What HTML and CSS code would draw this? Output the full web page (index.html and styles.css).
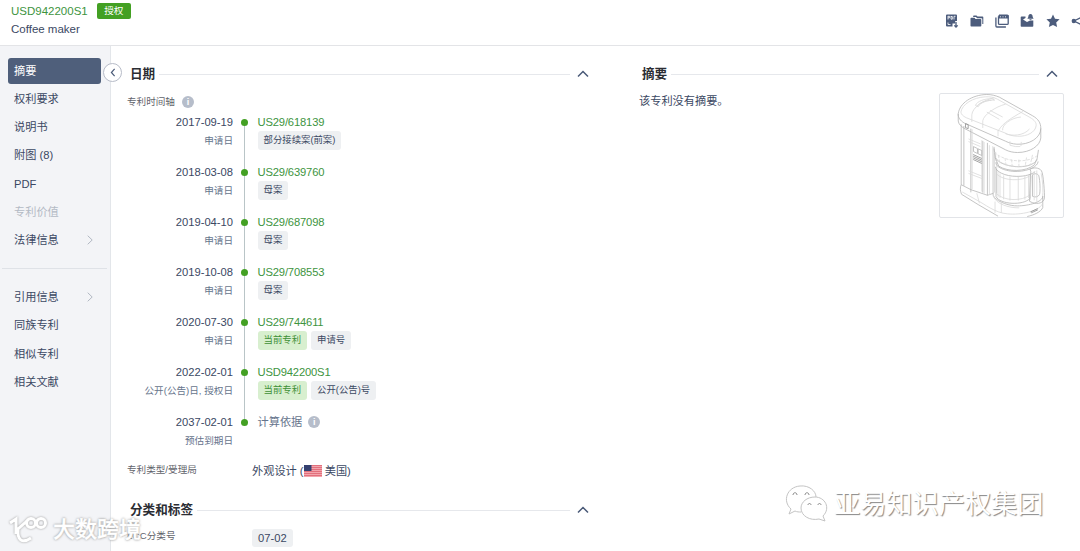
FILE: index.html
```html
<!DOCTYPE html>
<html lang="zh-CN">
  <head>
    <meta charset="UTF-8" />
    <meta name="viewport" content="width=device-width, initial-scale=1.0" />
    <title>USD942200S1 Coffee maker</title>
    <link rel="stylesheet" href="styles.css">
  </head>
  <body>
    <header class="header">
      <div class="patent">
        <div class="patent-no">
          <a>USD942200S1</a>
          <span class="status">授权</span>
        </div>
        <div class="patent-title">Coffee maker</div>
      </div>
      <div class="toolbar">
        <svg viewBox="0 0 14 14"><path d="M2 .5h9a1 1 0 0 1 1 1V7h-1.800v2.500H7.500v3H2a1 1 0 0 1-1-1v-10a1 1 0 0 1 1-1z"/><path class="cut" d="M3 2v3.500M3 2.300h1.500v1.500H3M6 2v3.200h1.300V2.500H6M9 5.500V2.300h1.500M3 8.500v2h2.500"/><path class="line" d="M11 8v5M9.300 11.400l1.700 1.700 1.700-1.700"/></svg>
        <svg viewBox="0 0 14 14"><path d="M3.500 1.500h3l1 1H12.500a.8.800 0 0 1 .8.800V10h-1V5a.8.800 0 0 0-.8-.8H7L6 3H3z"/><path d="M.5 4.500a.8.800 0 0 1 .8-.8h3.200l1 1.200h5a.8.800 0 0 1 .8.800v6a.8.800 0 0 1-.8.800H1.300a.8.800 0 0 1-.8-.8z"/></svg>
        <svg viewBox="0 0 14 14"><path class="line" d="M4 1.200h8.200a1 1 0 0 1 1 1v7.200a1 1 0 0 1-1 1H4.500a1 1 0 0 1-1-1V2.200M.9 3.500v8.500a1 1 0 0 0 1 1h9"/><path d="M3.500 1h10v3.500h-10z"/><path class="cut" d="M5 2.800h1M7.500 2.800h1M10 2.800h1"/></svg>
        <svg viewBox="0 0 14 14"><path d="M1.500 2.500h4v1.500L3 5.500 7 8l3-1.500h3.300V12a.8.800 0 0 1-.8.800h-11a.8.800 0 0 1-.8-.8V3.300a.8.800 0 0 1 .8-.8z"/><path d="M10.500 0c1.600 0 2.200 1.400 2.200 3l.9 1.800H7.400L8.300 3c0-1.600.6-3 2.200-3zM9.500 5.200h2v.8h-2z"/></svg>
        <svg viewBox="0 0 14 14"><path d="M7 .5l2 4.200 4.600.6-3.400 3.200.9 4.600L7 10.900l-4.100 2.200.9-4.600L.4 5.300 5 4.700z"/></svg>
        <svg viewBox="0 0 14 14"><path class="line" d="M11 3L3 7l8 4"/><circle cx="2.800" cy="7" r="2.200"/><circle cx="11" cy="3" r="2"/><circle cx="11" cy="11" r="2"/></svg>
      </div>
    </header>

    <div class="layout">
      <nav class="sidebar">
        <ul>
          <li class="active">摘要</li>
          <li>权利要求</li>
          <li>说明书</li>
          <li>附图 (8)</li>
          <li>PDF</li>
          <li class="disabled">专利价值</li>
          <li>法律信息<svg class="arrow" viewBox="0 0 6 10"><path d="M.7.7L5.200 5 .7 9.300"/></svg></li>
        </ul>
        <ul>
          <li>引用信息<svg class="arrow" viewBox="0 0 6 10"><path d="M.7.7L5.200 5 .7 9.300"/></svg></li>
          <li>同族专利</li>
          <li>相似专利</li>
          <li>相关文献</li>
        </ul>
        <button class="collapse"><svg viewBox="0 0 6 10"><path d="M4.800 1L1.200 5l3.600 4"/></svg></button>
      </nav>

      <main class="content">
        <div class="col-left">
          <div class="section-head">
            <h2>日期</h2>
            <svg class="chevron" viewBox="0 0 12 8"><path d="M1 6.500L6 1.500l5 5"/></svg>
          </div>
          <div class="label timeline-label">专利时间轴 <i class="info">i</i></div>

          <ul class="timeline">
            <li>
              <div class="when"><b>2017-09-19</b><small>申请日</small></div>
              <div class="what"><a>US29/618139</a><div><span class="tag">部分接续案(前案)</span></div></div>
            </li>
            <li>
              <div class="when"><b>2018-03-08</b><small>申请日</small></div>
              <div class="what"><a>US29/639760</a><div><span class="tag">母案</span></div></div>
            </li>
            <li>
              <div class="when"><b>2019-04-10</b><small>申请日</small></div>
              <div class="what"><a>US29/687098</a><div><span class="tag">母案</span></div></div>
            </li>
            <li>
              <div class="when"><b>2019-10-08</b><small>申请日</small></div>
              <div class="what"><a>US29/708553</a><div><span class="tag">母案</span></div></div>
            </li>
            <li>
              <div class="when"><b>2020-07-30</b><small>申请日</small></div>
              <div class="what"><a>US29/744611</a><div><span class="tag current">当前专利</span><span class="tag">申请号</span></div></div>
            </li>
            <li>
              <div class="when"><b>2022-02-01</b><small>公开(公告)日, 授权日</small></div>
              <div class="what"><a>USD942200S1</a><div><span class="tag current">当前专利</span><span class="tag">公开(公告)号</span></div></div>
            </li>
            <li>
              <div class="when"><b>2037-02-01</b><small>预估到期日</small></div>
              <div class="what"><span class="basis">计算依据 <i class="info">i</i></span></div>
            </li>
          </ul>

          <div class="field">
            <span class="label">专利类型/受理局</span>
            <span class="value">外观设计 (<svg class="flag" viewBox="0 0 18 12"><path fill="#f3a5ad" d="M0 0h18v12H0z"/><path stroke="#e2707c" d="M0 .5h18M0 2.500h18M0 4.500h18M0 6.500h18M0 8.500h18M0 10.500h18"/><path fill="#34406f" d="M0 0h7.500v6H0z"/></svg> 美国)</span>
          </div>

          <div class="section-head second">
            <h2>分类和标签</h2>
            <svg class="chevron" viewBox="0 0 12 8"><path d="M1 6.500L6 1.500l5 5"/></svg>
          </div>
          <div class="field loc">
            <span class="label">LOC分类号</span>
            <span class="code">07-02</span>
          </div>
        </div>

        <div class="col-right">
          <div class="section-head">
            <h2>摘要</h2>
            <svg class="chevron" viewBox="0 0 12 8"><path d="M1 6.500L6 1.500l5 5"/></svg>
          </div>
          <div class="abstract">
            <p>该专利没有摘要。</p>
            <div class="figure">
              <svg viewBox="29 101 371 370">
                <!-- lid -->
                <path d="M84 160C88 128 125 103 170 102c14 0 26 3 38 8l100 56c18 10 25 22 25 38 0 30-36 50-72 48-14-1-24-4-34-9L102 188c-12-7-19-17-18-28z"/>
                <path class="faint" d="M92 155c4-24 36-44 74-46 14-1 26 2 36 7l98 55c14 8 20 16 19 25-2 20-28 33-56 32-16-1-28-4-38-10L108 172c-10-5-15-10-16-17z"/>
                <path d="M84 160v22c1 9 8 16 18 22l125 65c10 5 22 8 36 8 38 0 68-20 70-44v-29"/>
                <path class="faint" d="M125 185v-22c2-22 35-45 68-51M158 203v-22c3-18 38-42 69-50M204 228v-18M205 211c14-24 40-38 74-58M136 135c3-12 30-22 50-20l8 4c-20-1-44 7-50 20zM142 136c5-9 26-17 42-16M170 155l38 22M180 150l38 20"/>
                <path class="faint" d="M240 243v12l16 4h14l4-4v-10M218 210c-3-16 25-38 55-40M226 220c20 8 55 7 73-14"/>
                <!-- body -->
                <path d="M93 192v182M122 205v192M158 242v156M192 260v138M172 248v158l18-6M93 374l29 15 50 17M101 197v180"/>
                <path class="faint" d="M126 207v180M155 240v155M162 245v156M178 255v150M188 258v142M115 236l36 15M115 244l36 15M115 332l42 17M115 340l42 16M197 275v28M200 305v95"/>
                <path d="M130 259l12 6v15l-12-6zM144 266l11 5v15l-11-5z"/>
                <path class="dark" d="M129 283l26 12M129 288l26 12M129 293l26 12M129 298l26 12M106 190v12l8 3v-12z"/>
                <!-- filter basket -->
                <path d="M192 265l4 28c20 30 100 38 125 8l5-32M196 293l10 25c28 18 82 18 108-4l6-16"/>
                <path class="faint dash" d="M193 276c30 30 100 35 130 10M198 298c28 26 92 28 120 8M205 285l5 27M225 294l4 26M245 298l2 24M267 298v24M290 292l-4 26M308 284l-6 27"/>
                <!-- carafe -->
                <path d="M198 306c-4 14 28 29 64 28 35-1 62-15 63-30M196 320c0 14 29 29 65 29 26 0 44-6 55-14M198 326v84c12 24 82 28 103 5v-72"/>
                <path class="faint" d="M204 334v78M210 340v74M221 346v72M240 350v72M265 350v72M285 347v72M296 344v70M198 400c23 24 79 25 103 4M201 343c20 20 75 21 98 5"/>
                <path d="M300 328c10-7 28-6 35 4 6 9 10 72 9 82-2 15-19 20-37 14l-8-4 4-91zM308 344c6-5 16-4 19 3 4 16 5 48 2 57-4 7-13 9-21 5z"/>
                <path class="faint" d="M313 333v88M321 331v94M334 340c5 20 7 54 4 76M304 348l-3 72"/>
                <!-- base -->
                <path d="M93 374c-4 8-3 20 1 29l50 31 60 35M190 398c-9 16 34 40 72 40 36 0 76-12 77-29M339 409v34c-5 13-27 23-47 27"/>
                <path class="faint" d="M96 396l45 25c20 10 55 39 92 41 40 4 94-8 104-29M140 400l8 30M195 425v34M190 410c10 22 44 34 78 34M214 427v32"/>
                <path class="dark" d="M302 456l22-10M304 459l20-9"/>
              </svg>
            </div>
          </div>
        </div>
      </main>
    </div>

    <div class="mark mark-left">
      <svg viewBox="0 0 42 30"><path d="M2 8l6-4v15M19 6l-9 8c-1 11 4 15 13 9"/><circle cx="23" cy="8" r="4.500"/><circle cx="33" cy="8" r="4.500"/></svg>
      <span>大数跨境</span>
    </div>
    <div class="mark mark-right">
      <svg viewBox="0 0 44 38"><path class="shade" d="M16 27c-2 0-4 0-6-1l-6 3 2-5C-3 16 2 2 15 1c9-1 16 5 16 11"/><path class="shade" d="M30 12c-8 0-14 5-14 11 0 8 9 13 18 11l6 2-2-5c8-8 2-19-8-19z"/><path class="eyes" d="M8 10c0-3 4-3 4 0M20 10c0-3 4-3 4 0M23 20c0-2 3-2 3 0M33 20c0-2 3-2 3 0"/></svg>
      <span>亚易知识产权集团</span>
    </div>
  </body>
</html>
```

FILE: styles.css
```css
* {
  margin: 0;
  padding: 0;
  box-sizing: border-box;
}

body {
  height: 551px;
  overflow: hidden;
  position: relative;
  background-color: #fff;
  color: #3b4863;
  font-family: "Liberation Sans", "Noto Sans CJK SC", sans-serif;
  font-size: 11.2px;
  line-height: 16px;
}

ul {
  list-style-type: none;
}

svg {
  display: block;
  flex: none;
}

a {
  color: #3d9440;
}

.header {
  height: 46px;
  display: flex;
  justify-content: space-between;
  border-bottom: 1px solid #e3e4e7;
}

.patent {
  padding: 2px 0 0 11px;
  font-size: 11.5px;
}

.patent-no {
  display: flex;
  align-items: center;
  gap: 9px;
  height: 17px;
}

.status {
  width: 34px;
  height: 16px;
  border-radius: 2px;
  background-color: #43a023;
  color: #fff;
  font-size: 9.6px;
  line-height: 15px;
  text-align: center;
}

.patent-title {
  padding-top: 2px;
}

.toolbar {
  display: flex;
  gap: 11.3px;
  padding-top: 14px;
  margin-right: -5px;
}

.toolbar svg {
  width: 14px;
  height: 14px;
  fill: #4c5c7c;
}

.toolbar .line {
  fill: none;
  stroke: #4c5c7c;
  stroke-width: 1.3;
}

.toolbar .cut {
  fill: none;
  stroke: #fff;
  stroke-width: 0.8;
}

.layout {
  display: flex;
  height: 505px;
}

.sidebar {
  position: relative;
  width: 111px;
  padding-top: 11px;
  background-color: #f3f4f7;
  border-right: 1px solid #e3e6ea;
}

.sidebar ul {
  padding: 0 9px 0 8px;
}

.sidebar ul + ul {
  margin: 14px 3px 0 2px;
  padding: 14px 6px 0;
  border-top: 1px solid #dfe2e7;
}

.sidebar li {
  display: flex;
  align-items: center;
  justify-content: space-between;
  height: 28.2px;
  padding: 0 8px 0 6px;
}

.sidebar .active {
  height: 26px;
  margin: 1px 0;
  border-radius: 3px;
  background-color: #4f5f7b;
  color: #fff;
}

.sidebar .disabled {
  color: #b4bac5;
}

.arrow {
  width: 6px;
  height: 10px;
  fill: none;
  stroke: #b2b8c3;
}

.collapse {
  position: absolute;
  top: 17px;
  left: 103px;
  width: 19px;
  height: 19px;
  display: flex;
  align-items: center;
  justify-content: center;
  border: 1px solid #b7bcc8;
  border-radius: 50%;
  background-color: #fff;
}

.collapse svg {
  width: 6px;
  height: 9px;
  fill: none;
  stroke: #4a5a78;
  stroke-width: 1.3;
}

.content {
  flex: 1;
  display: flex;
  justify-content: space-between;
  padding: 19px 16px 0;
}

.col-left {
  width: 463px;
}

.col-right {
  width: 425px;
}

.col-right .section-head {
  padding-right: 6px;
}

.section-head {
  display: flex;
  align-items: center;
  height: 18px;
  padding: 0 1px 0 3px;
}

.section-head h2 {
  color: #2b2d33;
  font-size: 12.6px;
  font-weight: bold;
}

.section-head::after {
  content: "";
  order: 1;
  flex: 1;
  height: 1px;
  margin: 0 7px 0 4px;
  background-color: #e6e8ec;
}

.section-head .chevron {
  order: 2;
  width: 12px;
  height: 8px;
  fill: none;
  stroke: #4a5a78;
  stroke-width: 1.5;
}

.label {
  color: #5f636b;
  font-size: 9.6px;
}

.timeline-label {
  display: flex;
  align-items: center;
  gap: 7px;
  height: 18px;
  margin-top: 10px;
}

.info {
  width: 12px;
  height: 12px;
  border-radius: 50%;
  background-color: #b6bdca;
  color: #fff;
  font: bold 9px/12px "Liberation Sans", sans-serif;
  text-align: center;
}

.timeline li {
  display: flex;
  height: 50px;
  position: relative;
}

.when {
  width: 106px;
  text-align: right;
}

.when b {
  display: block;
  height: 20px;
  line-height: 22px;
  font-weight: normal;
}

.when small {
  display: block;
  color: #66748c;
  font-size: 9.6px;
  line-height: 19px;
  white-space: nowrap;
}

.timeline li::before {
  content: "";
  position: absolute;
  left: 117px;
  top: 11px;
  width: 1px;
  height: 50px;
  background-color: #b9c5c7;
}

.timeline li:last-child::before {
  display: none;
}

.timeline li::after {
  content: "";
  position: absolute;
  left: 114px;
  top: 8px;
  width: 7px;
  height: 7px;
  border-radius: 50%;
  background-color: #43a023;
}

.what {
  padding: 2px 0 0 24.5px;
}

.what a,
.basis {
  display: flex;
  align-items: center;
  gap: 6px;
  height: 18px;
}

.what a {
  letter-spacing: -0.15px;
}

.basis {
  color: #66748c;
}

.what div {
  display: flex;
  gap: 4px;
}

.tag {
  height: 19px;
  padding: 0 6px;
  border-radius: 3px;
  background-color: #eef0f2;
  font-size: 9.4px;
  line-height: 18px;
}

.tag.current {
  background-color: #d8efcf;
  color: #3d8f36;
}

.field {
  display: flex;
  align-items: center;
  height: 20px;
}

.timeline + .field {
  margin-top: -1px;
}

.field .label {
  width: 125px;
}

.value {
  display: flex;
  align-items: center;
  padding-top: 2px;
  white-space: pre;
}

.flag {
  width: 18px;
  height: 12px;
}

.second {
  margin-top: 21px;
}

.loc {
  margin-top: 9px;
}

.loc .label {
  height: 20px;
}

.code {
  height: 18px;
  padding: 0 6px;
  border-radius: 3px;
  background-color: #eef0f2;
  line-height: 18px;
}

.abstract {
  display: flex;
  justify-content: space-between;
  padding-top: 10px;
}

.figure {
  width: 125px;
  height: 125px;
  border: 1px solid #e2e4e8;
  border-radius: 2px;
}

.figure svg {
  width: 123px;
  height: 123px;
  fill: none;
  stroke: #b4b4b4;
  stroke-width: 2.4;
}

.figure .faint {
  stroke: #d9d9d9;
}

.figure .dark {
  stroke: #8d8d8d;
}

.figure .dash {
  stroke-dasharray: 9 4;
}

.mark {
  position: absolute;
  display: flex;
  align-items: center;
  white-space: nowrap;
  color: #fff;
}

.mark svg {
  fill: none;
  stroke: #fff;
}

.mark-left {
  left: 8px;
  top: 515px;
  gap: 3px;
  font-size: 22px;
  font-weight: 500;
  line-height: 30px;
  text-shadow: 0 0 2px #999, 0 0 3px #aaa;
  -webkit-text-stroke: 0.4px #fff;
}

.mark-left svg {
  width: 42px;
  height: 30px;
  stroke-width: 3;
  filter: drop-shadow(0 0 1px #999);
}

.mark-right {
  left: 785px;
  top: 484px;
  gap: 5px;
  font-size: 26.2px;
  line-height: 40px;
  text-shadow: 1px 1px 1px #888;
}

.mark-right svg {
  width: 44px;
  height: 38px;
  stroke-width: 1;
}

.mark-right .shade {
  fill: #fff;
  stroke: #c4c4c4;
}

.mark-right .eyes {
  stroke: #8a8a8a;
}
```
